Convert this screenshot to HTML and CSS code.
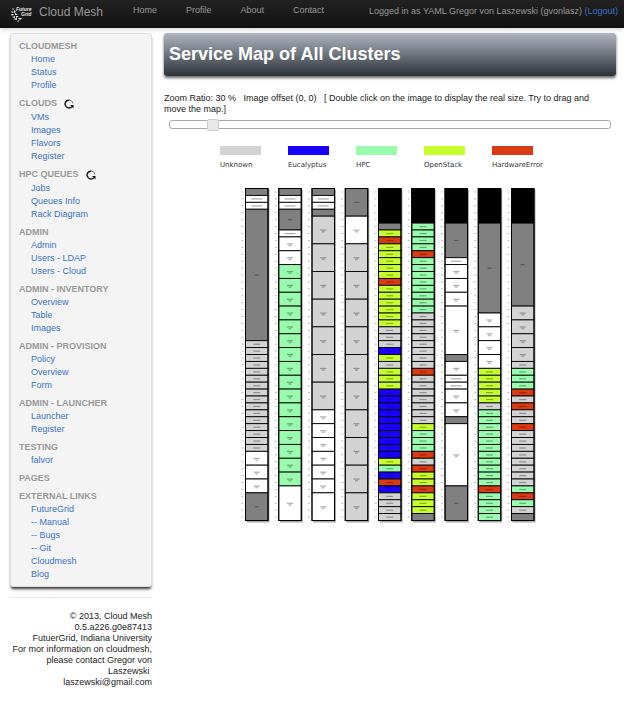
FILE: index.html
```html
<!DOCTYPE html>
<html lang="en">
<head>
<meta charset="utf-8">
<title>Cloud Mesh</title>
<link rel="stylesheet" href="styles.css">
</head>
<body>
<header class="navbar">
  <a class="brand" href="#">
    <svg class="logo" viewBox="0 0 24 16" aria-hidden="true">
      <g fill="#e8e8e8">
        <path d="M2 2l2 1-1 1zM1 5l3 1-2 1zM4 4l2 2-2 1zM1 8l3 0-2 2zM5 7l3 2-3 0zM2 11l3-1 0 2zM6 10l3 0-3 2zM3 13l4-1 0 2zM8 12l4 0-2 2zM7 15l3-1-2 2z"/>
        <text x="6" y="5" class="logo-text">Future</text>
        <text x="11" y="10" class="logo-text">Grid</text>
      </g>
    </svg>
    <span>Cloud Mesh</span>
  </a>
  <nav class="menu">
    <a href="#">Home</a>
    <a href="#">Profile</a>
    <a href="#">About</a>
    <a href="#">Contact</a>
  </nav>
  <p class="session">Logged in as YAML Gregor von Laszewski (gvonlasz) <a href="#">(Logout)</a></p>
</header>
<div class="page">
  <aside class="side">
    <nav class="panel">
      <section><h2>CLOUDMESH</h2><a href="#">Home</a><a href="#">Status</a><a href="#">Profile</a></section>
      <section>
        <h2 class="with-icon">CLOUDS <button class="refresh" type="button" aria-label="Refresh clouds"><svg viewBox="0 0 10 10"><path d="M5.500 1.200A3.800 3.800 0 0 0 2.200 7.600" fill="none" stroke="#222" stroke-width="1.500"/><path d="M2 7.400A3.800 3.800 0 0 0 8.200 7.400" fill="none" stroke="#222" stroke-width="1.500"/><path d="M6 6h3.500v3.500z" fill="#111"/><path d="M5.500 1.200A3.800 3.800 0 0 1 9 4.500" fill="none" stroke="#777"/></svg></button></h2>
        <a href="#">VMs</a><a href="#">Images</a><a href="#">Flavors</a><a href="#">Register</a>
      </section>
      <section>
        <h2 class="with-icon">HPC QUEUES <button class="refresh" type="button" aria-label="Refresh queues"><svg viewBox="0 0 10 10"><path d="M5.500 1.200A3.800 3.800 0 0 0 2.200 7.600" fill="none" stroke="#222" stroke-width="1.500"/><path d="M2 7.400A3.800 3.800 0 0 0 8.200 7.400" fill="none" stroke="#222" stroke-width="1.500"/><path d="M6 6h3.500v3.500z" fill="#111"/><path d="M5.500 1.200A3.800 3.800 0 0 1 9 4.500" fill="none" stroke="#777"/></svg></button></h2>
        <a href="#">Jobs</a><a href="#">Queues Info</a><a href="#">Rack Diagram</a>
      </section>
      <section><h2>ADMIN</h2><a href="#">Admin</a><a href="#">Users - LDAP</a><a href="#">Users - Cloud</a></section>
      <section><h2>ADMIN - INVENTORY</h2><a href="#">Overview</a><a href="#">Table</a><a href="#">Images</a></section>
      <section><h2>ADMIN - PROVISION</h2><a href="#">Policy</a><a href="#">Overview</a><a href="#">Form</a></section>
      <section><h2>ADMIN - LAUNCHER</h2><a href="#">Launcher</a><a href="#">Register</a></section>
      <section><h2>TESTING</h2><a href="#">falvor</a></section>
      <section><h2>PAGES</h2></section>
      <section><h2>EXTERNAL LINKS</h2><a href="#">FutureGrid</a><a href="#">-- Manual</a><a href="#">-- Bugs</a><a href="#">-- Git</a><a href="#">Cloudmesh</a><a href="#">Blog</a></section>
    </nav>
    <footer class="credits">© 2013, Cloud Mesh<br>0.5.a226.g0e87413<br>FutuerGrid, Indiana University<br>For mor information on cloudmesh,<br>please contact Gregor von<br>Laszewski&nbsp;<br>laszewski@gmail.com</footer>
  </aside>
  <main class="content">
    <h1 class="title">Service Map of All Clusters</h1>
    <label class="hint" for="zoom">Zoom Ratio: 30 % &nbsp; Image offset (0, 0) &nbsp; [ Double click on the image to display the real size. Try to drag and move the map.]</label>
    <input class="zoom" id="zoom" type="range" min="0" max="1000" value="87">
    <svg class="map" id="map" viewBox="0 0 452 390" role="img" aria-label="Service map"></svg>
  </main>
</div>
<script src="map.js"></script>
</body>
</html>
```
FILE: styles.css
```css
* { box-sizing: border-box; }
body {
  margin: 0;
  background: #fff;
  color: #222;
  font-family: "Liberation Sans", Arial, sans-serif;
  font-size: 9px;
  line-height: 11px;
}
a { color: #3b73c8; text-decoration: none; }
.navbar {
  display: flex;
  align-items: flex-start;
  height: 28px;
  padding: 0 6px 0 10px;
  background: linear-gradient(#222, #111);
  box-shadow: 0 1px 5px rgba(0, 0, 0, .2);
  color: #999;
  white-space: nowrap;
}
.brand {
  display: flex;
  align-items: center;
  gap: 5px;
  width: 123px;
  height: 24px;
  color: #999;
  font-size: 12px;
}
.logo { width: 24px; height: 16px; margin-top: 4px; overflow: visible; }
.logo-text { font: italic bold 5px "Liberation Sans", sans-serif; }
.menu { display: flex; gap: 29px; padding-top: 5px; }
.menu a { color: #999; }
.session { margin: 6px 0 0 auto; }
.page { display: flex; gap: 12px; padding: 5px 8px 20px 10px; }
.side { flex: 0 0 142px; min-width: 0; }
.panel {
  display: flex;
  flex-direction: column;
  gap: 5px;
  padding: 6px 8px 5px;
  border: 1px solid #ddd;
  border-radius: 3px;
  background: #f4f4f4;
  box-shadow: 0 3px 3px -1px #333;
  line-height: 13px;
}
.panel h2 { margin: 0; color: #999; font-size: 9px; line-height: 13px; }
.panel a { display: block; padding-left: 12px; }
.panel .with-icon { display: flex; gap: 7px; height: 14px; }
.refresh { width: 10px; height: 10px; margin-top: 2px; padding: 0; border: 0; background: none; }
.refresh svg { display: block; width: 10px; height: 10px; }
.credits {
  margin-top: 10px;
  padding-top: 13px;
  border-top: 1px solid #e5e5e5;
  text-align: right;
  white-space: nowrap;
}
.content { flex: 1; min-width: 0; }
.title {
  margin: 0 0 17px;
  padding: 0 5px;
  border-radius: 3px;
  background: linear-gradient(#b0b5c0, #2b3238);
  box-shadow: 0 2px 3px rgba(0, 0, 0, .6);
  color: #fff;
  font-size: 18px;
  line-height: 43px;
}
.hint { display: block; padding-right: 12px; }
.zoom {
  display: block;
  width: calc(100% - 10px);
  height: 9px;
  margin: 5px;
  border: 1px solid #aaa;
  border-radius: 3px;
  background: #fff;
  appearance: none;
}
.zoom::-webkit-slider-thumb {
  width: 12px;
  height: 12px;
  border: 1px solid #ccc;
  border-radius: 2px;
  background: #e8e8e8;
  appearance: none;
}
.map { display: block; width: 100%; margin-top: 9px; }
.legend-text { fill: #333; font: 7px "DejaVu Sans", sans-serif; }
```
FILE: map.js
```js
const NS = "http://www.w3.org/2000/svg";
const map = document.getElementById("map");
const colors = { k: "#000", g: "#808080", w: "#fff", u: "#d3d3d3", b: "#1a00ff", h: "#98fbad", o: "#c6ff2b", r: "#db3a12" };

function add(name, attrs, text) {
  const el = document.createElementNS(NS, name);
  for (const key in attrs) el.setAttribute(key, attrs[key]);
  if (text) el.textContent = text;
  map.appendChild(el);
}

[["Unknown", "u"], ["Eucalyptus", "b"], ["HPC", "h"], ["OpenStack", "o"], ["HardwareError", "r"]].forEach(([label, key], i) => {
  add("rect", { x: 56 + i * 68, y: 8, width: 41, height: 9, fill: colors[key] });
  add("text", { x: 56 + i * 68, y: 29, class: "legend-text" }, label);
});

// Each entry is a state, the height in rack units, and an optional repeat count.
const racks = [
  "g1 w1 w1 g19 u1*16 w2*3 g4",
  "g1 w1 w1 g3 w1 w2*2 h2*16 w5",
  "g1 w1 w1 g1 u4*7 w2*6 w4",
  "g4 w4 u4*10",
  "k5 g1 o1 r1 o1*5 r1 o1*6 u1*3 b1 o1 u1 o1*3 b1*10 o1 h1 b1 r1 b1 u1*4",
  "k5 h1*4 r1 h1*8 u1*8 r1 u1*7 o1 h1*3 r1 u1 r1 o1*2 r1 o1*3 g1",
  "k5 g5 w1 w2*3 w7 g1 w2 w1*2 w2*2 g1 w9 g5",
  "k5 g13 w2*4 o1*5 u1 h1*11 r1 h1*4",
  "k5 g12 u2*4 u1 h1*3 r1 u1 r1 u1*2 r1 u1*8 h1 r1 h1 u1 g1"
];
const unit = 332 / 48;
const top0 = 50.5;
racks.forEach((spec, i) => {
  const x = 81.5 + i * 33.25;
  add("rect", { x: x + 1, y: top0 + 1, width: 23, height: 333, fill: "#aaa" });
  for (let n = 0; n < 48; n++) {
    add("rect", { x: x - 4, y: top0 + n * unit + 3, width: 2, height: 1, fill: "#bbb" });
  }
  let at = 0;
  spec.split(" ").forEach(part => {
    const [, key, size, count] = part.match(/(\w)(\d+)\*?(\d*)/);
    for (let n = 0; n < (count || 1); n++) {
      const y = top0 + at * unit;
      const h = size * unit;
      add("rect", { x, y, width: 22.5, height: h, fill: colors[key], stroke: "#000", "stroke-width": 0.9 });
      if (key !== "k" && !(key === "g" && size == 1)) {
        const w = size == 1 ? (key === "w" ? 11 : 7) : (key === "g" ? 4 : 6);
        const mid = y + h / 2;
        add("rect", { x: x + 11.25 - w / 2, y: mid - 0.5, width: w, height: 1.2, fill: "#000", opacity: 0.32 });
        if (size > 1 && key !== "g") add("rect", { x: x + 9.75, y: mid + 1, width: 3, height: 1.5, fill: "#000", opacity: 0.25 });
      }
      at += Number(size);
    }
  });
  add("rect", { x, y: top0, width: 22.5, height: 332, fill: "none", stroke: "#000", "stroke-width": 1 });
});
```
